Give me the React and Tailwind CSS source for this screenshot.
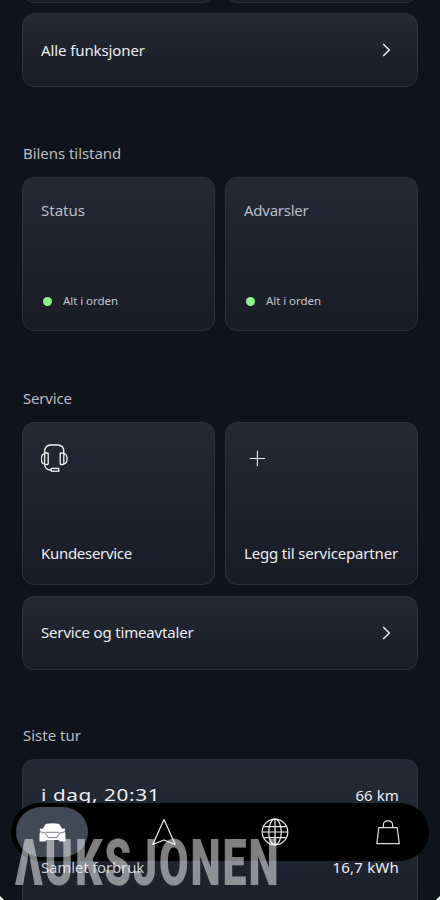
import React from 'react';

const Card = ({ className = '', children }) => (
  <div className={`min-w-0 rounded-xl border border-[#2b313b] bg-linear-to-b from-[#232a35] to-[#191c26] ${className}`}>
    {children}
  </div>
);

const SectionTitle = ({ children, className = '' }) => (
  <h2 className={`h-6 pl-px text-[15px] leading-6 text-[#b9bcc2] ${className}`}>{children}</h2>
);

const ChevronIcon = () => (
  <svg className="h-4 w-4" viewBox="0 0 16 16" fill="none" stroke="#eef0f3" strokeWidth="1.4">
    <path d="M5.2 1.9 L11.3 8 L5.2 14.1" />
  </svg>
);

const LinkRow = ({ label, spacing }) => (
  <Card className="flex h-[74px] items-center justify-between pr-[23px] pl-[18px]">
    <span className={`text-[15px] text-[#eceef1] ${spacing}`}>{label}</span>
    <ChevronIcon />
  </Card>
);

const StatusCard = ({ title, spacing }) => (
  <Card className="flex h-[154px] flex-col justify-between px-[18px] pt-[20px] pb-[17px]">
    <div className={`text-[15px] leading-6 text-[#b9bdc5] ${spacing}`}>{title}</div>
    <div className="flex h-6 items-center gap-[11px] pl-0.5">
      <span className="h-[9px] w-[9px] rounded-full bg-[#8cf58c]" />
      <span className="text-[11.5px] tracking-[-0.05px] text-[#c3c6cc]">Alt i orden</span>
    </div>
  </Card>
);

const HeadsetIcon = () => (
  <svg className="h-7 w-7" viewBox="0 0 28 28" fill="none" stroke="#f1f3f5" strokeWidth="1.3">
    <path d="M3.6 9 V8 Q3.6 1 10 1 H16.7 Q22.8 1 22.8 8 V9" />
    <rect x="3.6" y="9" width="3.6" height="11.5" rx="0.8" />
    <rect x="19.2" y="9" width="3.6" height="11.5" rx="0.8" />
    <path d="M3.6 9.6 C-0.8 10 -0.8 19.6 3.6 20" />
    <path d="M22.8 9.6 C27.2 10 27.2 19.6 22.8 20" />
    <path d="M3.6 20.5 Q4.1 26 10 26" />
    <rect x="10.3" y="24.4" width="7.4" height="2.8" />
  </svg>
);

const PlusIcon = () => (
  <svg className="h-7 w-7" viewBox="0 0 28 28" fill="none" stroke="#eef0f3" strokeWidth="1.1">
    <path d="M13.4 6.8 V22.2 M5.7 14.5 H21.1" />
  </svg>
);

const CarIcon = () => (
  <svg className="h-[19px] w-[27px]" viewBox="0 0 27 19">
    <path
      d="M7.3 0.7 Q13.5 -0.4 19.7 0.7 Q21 1.5 23.2 5.8 L26 5.5 L26.3 7.2 L25.2 7.8 Q26.5 9.5 26.5 12 V18.5 H20.6 L19.6 17 H7.4 L6.4 18.5 H0.5 V12 Q0.5 9.5 1.8 7.8 L0.7 7.2 L1 5.5 L3.8 5.8 Q6 1.5 7.3 0.7 Z"
      fill="#ffffff"
    />
    <path
      d="M1.6 9 L6.2 9.9 M25.4 9 L20.8 9.9 M7.2 9.3 H19.8 L20.2 11 L17.8 14.6 H9.2 L6.8 11 Z"
      fill="none"
      stroke="#57606c"
      strokeWidth="0.8"
    />
  </svg>
);

const NavigationIcon = () => (
  <svg className="h-7 w-6" viewBox="0 0 24 28" fill="none" stroke="#eeeeee" strokeWidth="1.2">
    <path d="M12 1.5 L23.2 26.5 L12 22 L0.8 26.5 Z" strokeLinejoin="round" />
  </svg>
);

const GlobeIcon = () => (
  <svg className="h-7 w-7" viewBox="0 0 28 28" fill="none" stroke="#eeeeee" strokeWidth="1.2">
    <circle cx="14" cy="14" r="12.8" />
    <ellipse cx="14" cy="14" rx="6.3" ry="12.8" />
    <path d="M14 1.2 V26.8 M1.2 14 H26.8 M3.2 8.6 H24.8 M3.2 19.6 H24.8" />
  </svg>
);

const BagIcon = () => (
  <svg className="h-[26px] w-6" viewBox="0 0 24 26" fill="none" stroke="#dcdcdc" strokeWidth="1.2">
    <path d="M2.8 8.6 H21.2 L23.3 24.6 H0.8 Z" />
    <path d="M7.4 8.6 V6 Q7.4 1.8 12 1.8 Q16.6 1.8 16.6 6 V8.6" />
  </svg>
);

const TabBar = () => (
  <nav className="absolute top-[803px] left-[11px] flex h-[58px] w-[418px] items-center rounded-full bg-black pl-[5px]">
    <div className="flex h-[50px] w-[72px] items-center justify-center rounded-full bg-[#404956]">
      <CarIcon />
    </div>
    <div className="ml-[64px] flex"><NavigationIcon /></div>
    <div className="ml-[85px] flex"><GlobeIcon /></div>
    <div className="ml-[87px] flex"><BagIcon /></div>
  </nav>
);

export default function App() {
  return (
    <div className="relative h-[900px] w-[440px] overflow-hidden bg-[#0e131c] font-['Noto_Sans',sans-serif]">
      <main className="flex flex-col px-[22px]">
        <div className="-mt-[71px] grid grid-cols-2 gap-2.5">
          <Card className="h-[74px]" />
          <Card className="h-[74px]" />
        </div>
        <div className="mt-2.5">
          <LinkRow label="Alle funksjoner" spacing="tracking-[-0.1px]" />
        </div>

        <SectionTitle className="mt-[54px] tracking-[-0.05px]">Bilens tilstand</SectionTitle>
        <div className="mt-3 grid grid-cols-2 gap-2.5">
          <StatusCard title="Status" spacing="" />
          <StatusCard title="Advarsler" spacing="tracking-[-0.25px]" />
        </div>

        <SectionTitle className="mt-[55px] tracking-[-0.2px]">Service</SectionTitle>
        <div className="mt-3 grid grid-cols-2 gap-2.5">
          <Card className="flex h-[163px] flex-col justify-between px-[18px] pt-[21px] pb-[19px]">
            <HeadsetIcon />
            <span className="text-[15px] leading-6 tracking-[-0.3px] text-[#eceef1]">Kundeservice</span>
          </Card>
          <Card className="flex h-[163px] flex-col justify-between pt-[21px] pb-[19px] pl-[18px]">
            <PlusIcon />
            <span className="text-[15px] leading-6 tracking-[-0.17px] whitespace-nowrap text-[#eceef1]">
              Legg til servicepartner
            </span>
          </Card>
        </div>
        <div className="mt-[11px]">
          <LinkRow label="Service og timeavtaler" spacing="-mt-px tracking-[-0.17px]" />
        </div>

        <SectionTitle className="mt-[53px]">Siste tur</SectionTitle>
        <Card className="mt-3 h-[230px] px-[18px] pt-[23px]">
          <div className="flex h-6 items-center justify-between text-[#eceef1]">
            <span className="origin-left scale-x-[1.22] text-[17px] tracking-[0.5px] whitespace-nowrap">
              i dag, 20:31
            </span>
            <span className="text-[15px] tracking-[0.1px]">66 km</span>
          </div>
          <div className="mt-12 flex h-6 items-center justify-between">
            <span className="text-[15px] tracking-[-0.17px] text-[#c9ccd1]">Samlet forbruk</span>
            <span className="text-[15px] tracking-[0.2px] text-[#eceef1]">16,7 kWh</span>
          </div>
        </Card>
      </main>

      <TabBar />

      <div className="absolute top-[827px] left-[15px] origin-left scale-x-[0.66] font-['Roboto',sans-serif] text-[65px] leading-[72px] font-black tracking-[2.9px] whitespace-nowrap text-white/50">
        ΛUKSJONEN
      </div>

      {/* screen corners */}
      <div className="absolute -bottom-1 -left-1 h-[7px] w-[7px] rotate-45 bg-white" />
      <div className="absolute -right-1 -bottom-1 h-[7px] w-[7px] rotate-45 bg-white" />
    </div>
  );
}
